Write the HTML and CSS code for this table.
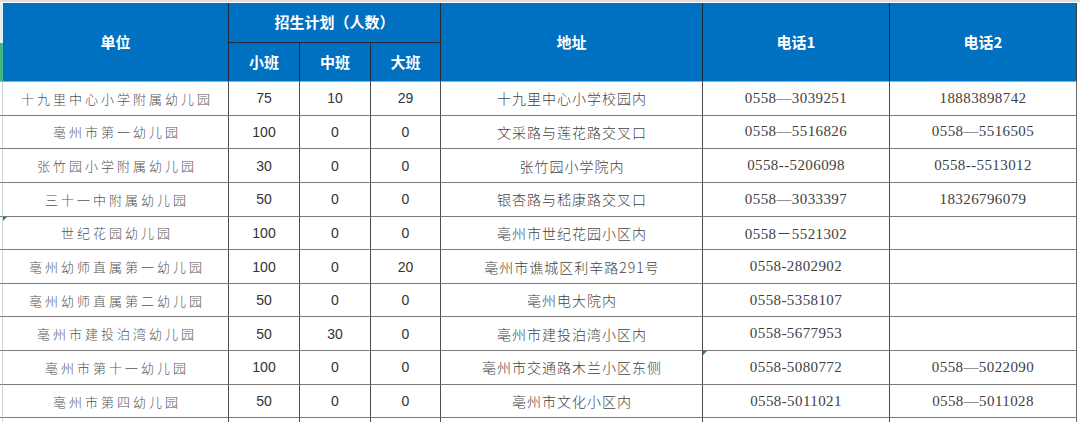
FILE: index.html
```html
<!DOCTYPE html>
<html lang="zh-CN">
<head>
<meta charset="utf-8">
<title>招生计划</title>
<link rel="stylesheet" href="styles.css">
</head>
<body>
<div class="topline"></div>
<div class="sheet">
  <div class="g gh1"></div>
  <div class="h rs2">单位</div>
  <div class="h cs3 sub">招生计划（人数）</div>
  <div class="h rs2">地址</div>
  <div class="h rs2">电话1</div>
  <div class="h rs2 last">电话2</div>
  <div class="g gh2"></div>
  <div class="h low">小班</div>
  <div class="h low">中班</div>
  <div class="h low">大班</div>

  <div class="g"></div><div class="c name">十九里中心小学附属幼儿园</div><div class="c num">75</div><div class="c num">10</div><div class="c num">29</div><div class="c addr">十九里中心小学校园内</div><div class="c tel">0558—3039251</div><div class="c tel last">18883898742</div>
  <div class="g"></div><div class="c name">亳州市第一幼儿园</div><div class="c num">100</div><div class="c num">0</div><div class="c num">0</div><div class="c addr">文采路与莲花路交叉口</div><div class="c tel">0558—5516826</div><div class="c tel last">0558—5516505</div>
  <div class="g"></div><div class="c name">张竹园小学附属幼儿园</div><div class="c num">30</div><div class="c num">0</div><div class="c num">0</div><div class="c addr">张竹园小学院内</div><div class="c tel">0558--5206098</div><div class="c tel last">0558--5513012</div>
  <div class="g"></div><div class="c name">三十一中附属幼儿园</div><div class="c num">50</div><div class="c num">0</div><div class="c num">0</div><div class="c addr">银杏路与嵇康路交叉口</div><div class="c tel">0558—3033397</div><div class="c tel last">18326796079</div>
  <div class="g"></div><div class="c name flag">世纪花园幼儿园</div><div class="c num">100</div><div class="c num">0</div><div class="c num">0</div><div class="c addr">亳州市世纪花园小区内</div><div class="c tel">0558－5521302</div><div class="c tel last"></div>
  <div class="g"></div><div class="c name">亳州幼师直属第一幼儿园</div><div class="c num">100</div><div class="c num">0</div><div class="c num">20</div><div class="c addr">亳州市谯城区利辛路291号</div><div class="c tel">0558-2802902</div><div class="c tel last"></div>
  <div class="g"></div><div class="c name">亳州幼师直属第二幼儿园</div><div class="c num">50</div><div class="c num">0</div><div class="c num">0</div><div class="c addr">亳州电大院内</div><div class="c tel">0558-5358107</div><div class="c tel last"></div>
  <div class="g"></div><div class="c name">亳州市建投泊湾幼儿园</div><div class="c num">50</div><div class="c num">30</div><div class="c num">0</div><div class="c addr">亳州市建投泊湾小区内</div><div class="c tel">0558-5677953</div><div class="c tel last"></div>
  <div class="g"></div><div class="c name">亳州市第十一幼儿园</div><div class="c num">100</div><div class="c num">0</div><div class="c num">0</div><div class="c addr">亳州市交通路木兰小区东侧</div><div class="c tel flag"> 0558-5080772</div><div class="c tel last">0558—5022090</div>
  <div class="g"></div><div class="c name">亳州市第四幼儿园</div><div class="c num">50</div><div class="c num">0</div><div class="c num">0</div><div class="c addr">亳州市文化小区内</div><div class="c tel">0558-5011021</div><div class="c tel last">0558—5011028</div>
  <div class="g"></div><div class="c"></div><div class="c"></div><div class="c"></div><div class="c"></div><div class="c"></div><div class="c"></div><div class="c last"></div>
</div>
</body>
</html>
```
FILE: styles.css
```css
html, body {
  margin: 0;
  padding: 0;
  background: #ffffff;
  overflow: hidden;
}
body {
  width: 1080px;
  height: 422px;
  font-family: "Noto Sans CJK SC", "Noto Sans", sans-serif;
}
.topline {
  height: 3px;
  box-sizing: border-box;
  border-top: 2px solid #dedede;
}
.sheet {
  position: relative;
  display: grid;
  grid-template-columns: 3px 226px 71px 71px 70px 262px 187px 187px;
  grid-template-rows: 40px 39px repeat(10, 33.65px) 12px;
}
.sheet > div {
  box-sizing: border-box;
  display: flex;
  align-items: center;
  justify-content: center;
  white-space: nowrap;
  position: relative;
}
.g {
  background: #ffffff;
  border-right: 1px solid #c9d2dd;
  border-bottom: 1px solid #7a7a7a;
}
.gh1 {
  background: #e9eef3;
  border-bottom: none;
  border-right: none;
}
.gh2 {
  background: #3fb784;
  border-right: none;
  border-bottom: 1px solid #5ec8bb;
}
.h {
  background: #0070c0;
  color: #ffffff;
  font-weight: 700;
  font-size: 15px;
  border-right: 1px solid #1d2b3a;
  padding-bottom: 2px;
}
.h.last {
  border-right: 1px solid #3a4550;
}
.rs2 {
  grid-row: span 2;
  border-bottom: 1px solid #5ec8bb;
}
.cs3 {
  grid-column: span 3;
  border-bottom: 1px solid #1d2b3a;
}
.low {
  border-bottom: 1px solid #5ec8bb;
}
.c {
  border-right: 1px solid #4c4c4c;
  border-bottom: 1px solid #7a7a7a;
  color: #444444;
}
.c.last {
  border-right: 1px solid #6a6a6a;
}
.name {
  font-size: 13px;
  letter-spacing: 3px;
  padding-left: 3px;
  color: #555555;
  font-weight: 300;
}
.num {
  font-family: "Liberation Sans", Arial, sans-serif;
  font-size: 14px;
  color: #333333;
}
.addr {
  font-size: 14px;
  letter-spacing: 1px;
  padding-left: 1px;
  color: #444444;
  font-weight: 300;
}
.tel {
  font-family: "Liberation Serif", "Times New Roman", "Noto Sans CJK SC", serif;
  font-size: 15px;
  letter-spacing: 0.4px;
  color: #3f3f3f;
}
.flag::before {
  content: "";
  position: absolute;
  left: 0;
  top: 0;
  width: 0;
  height: 0;
  border-top: 4px solid #1f8a3a;
  border-right: 4px solid transparent;
}
```
